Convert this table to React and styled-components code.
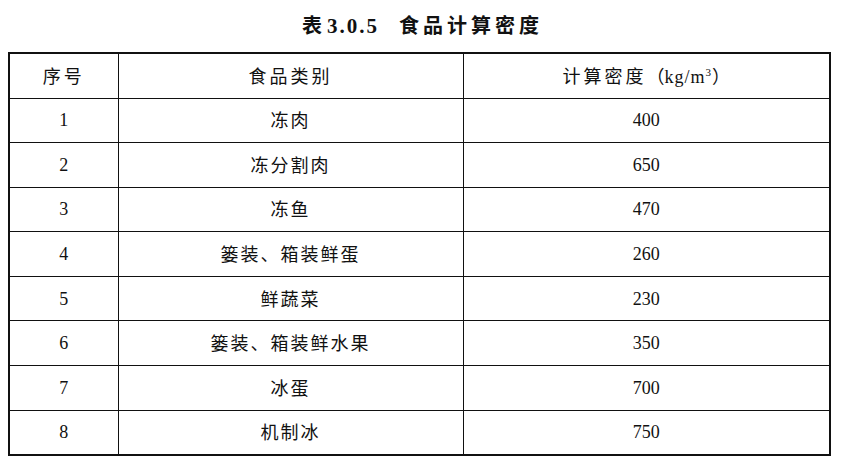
import React from "react";
import styled, { createGlobalStyle } from "styled-components";

const GlobalStyle = createGlobalStyle`
  html, body {
    margin: 0;
    padding: 0;
    background: #fff;
  }
  body {
    font-family: "Liberation Serif", "Noto Sans CJK SC", serif;
    color: #111;
  }
`;

const Page = styled.div`
  width: 844px;
  height: 462px;
  box-sizing: border-box;
  padding: 0 15px 0 8px;
  display: flex;
  flex-direction: column;
`;

const Title = styled.h1`
  margin: 0;
  height: 52px;
  display: flex;
  align-items: center;
  justify-content: center;
  gap: 20px;
  padding: 0 0 4px 8px;
  box-sizing: border-box;
  font-size: 20px;
  font-weight: 700;
  font-family: "Liberation Serif", "Noto Sans CJK SC", serif;
`;

const Num = styled.span`
  letter-spacing: 2px;
  font-size: 21px;
`;

const Cjk = styled.span`
  font-family: "Noto Sans CJK SC", sans-serif;
  letter-spacing: ${({ spread }) => spread || 0}px;
`;

const Table = styled.table`
  width: 821px;
  border-collapse: collapse;
  border: 2px solid #111;
  table-layout: fixed;
`;

const Row = styled.tr`
  height: ${({ h }) => h}px;
`;

const Cell = styled.td`
  border: 1px solid #111;
  padding: 0;
  text-align: center;
  vertical-align: middle;
  font-size: 18px;
  font-family: "Liberation Serif", "Noto Sans CJK SC", serif;
  line-height: 1;
`;

const HeadCell = styled(Cell).attrs({ as: "th" })`
  font-weight: 400;
`;

const Unit = styled.span`
  letter-spacing: 1px;
`;

const Sup = styled.sup`
  font-size: 11px;
  vertical-align: 7px;
  line-height: 0;
`;

const rows = [
  ["1", "冻肉", "400"],
  ["2", "冻分割肉", "650"],
  ["3", "冻鱼", "470"],
  ["4", "篓装、箱装鲜蛋", "260"],
  ["5", "鲜蔬菜", "230"],
  ["6", "篓装、箱装鲜水果", "350"],
  ["7", "冰蛋", "700"],
  ["8", "机制冰", "750"],
];

const App = () => (
  <>
    <GlobalStyle />
    <Page>
      <Title>
        <span>
          <Cjk>表</Cjk> <Num>3.0.5</Num>
        </span>
        <Cjk spread={4}>食品计算密度</Cjk>
      </Title>
      <Table>
        <colgroup>
          <col style={{ width: 109 }} />
          <col style={{ width: 345 }} />
          <col style={{ width: 367 }} />
        </colgroup>
        <thead>
          <Row h={45}>
            <HeadCell>
              <Cjk spread={3}>序号</Cjk>
            </HeadCell>
            <HeadCell>
              <Cjk spread={3}>食品类别</Cjk>
            </HeadCell>
            <HeadCell>
              <Cjk spread={3}>计算密度</Cjk>
              <Cjk>（</Cjk>
              <Unit>
                kg/m<Sup>3</Sup>
              </Unit>
              <Cjk>）</Cjk>
            </HeadCell>
          </Row>
        </thead>
        <tbody>
          {rows.map(([no, name, density]) => (
            <Row h={44.6} key={no}>
              <Cell>{no}</Cell>
              <Cell>
                <Cjk spread={2}>{name}</Cjk>
              </Cell>
              <Cell>{density}</Cell>
            </Row>
          ))}
        </tbody>
      </Table>
    </Page>
  </>
);

export default App;
